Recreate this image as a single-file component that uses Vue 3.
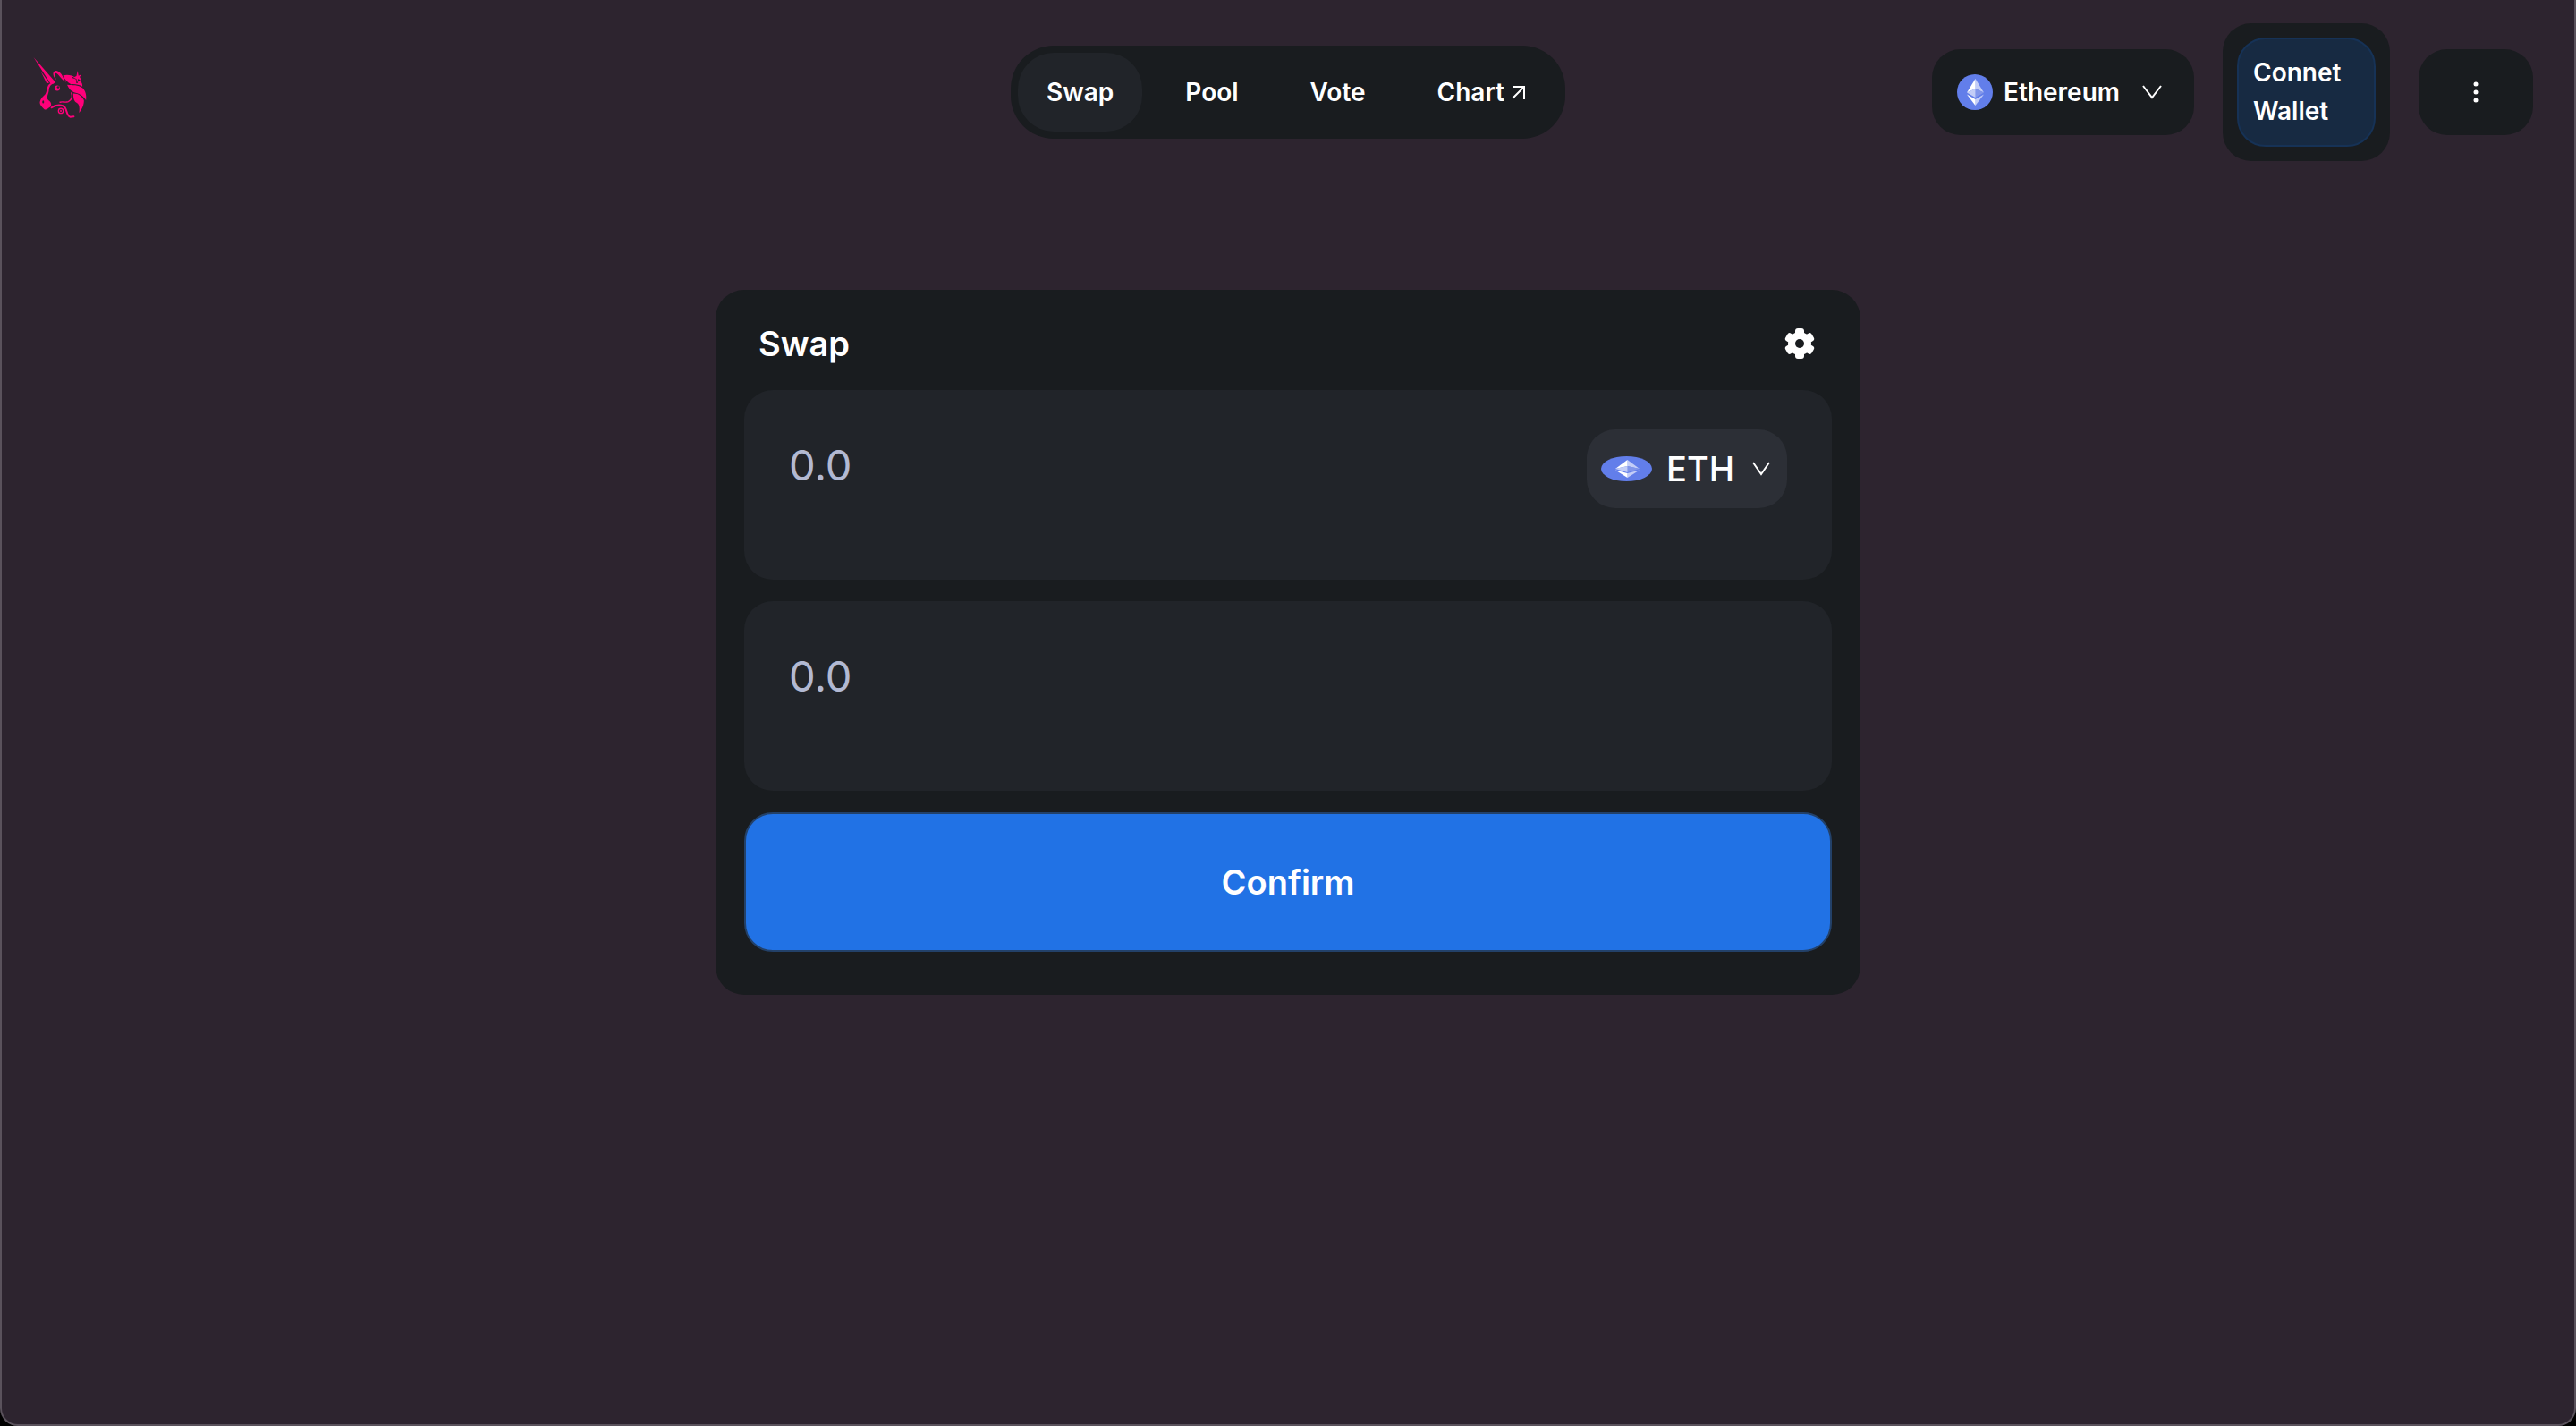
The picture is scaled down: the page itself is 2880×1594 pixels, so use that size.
<script setup>
import { ref } from 'vue'

const links = [
  { name: 'Swap', active: true },
  { name: 'Pool' },
  { name: 'Vote' },
  { name: 'Chart', external: true },
]
const chain = ref('Ethereum')
const token = ref('ETH')
const amountIn = ref('')
const amountOut = ref('')
</script>

<template>
  <div class="window">
    <header class="header">
      <a class="logo" href="#" aria-label="Home">
        <svg viewBox="45 35 190 215" fill="#ff007a">
          <path d="M52 41 L122 121 Q125 127 119 129 L109 130 Z" />
          <path d="M76 88 L96 128 L104 126 Z" />
          <path d="M122 127 C108 132 104 140 103 152 C101 166 95 172 98 180 C102 187 109 188 110 195 C112 201 110 207 104 209 C99 213 94 218 88 215 C80 206 72 199 73 190 C75 180 83 172 90 166 C97 157 95 145 101 134 C106 127 114 127 122 127 Z" />
          <path d="M118 100 C115 88 126 83 134 88 C141 92 145 97 148 103 C152 112 155 118 161 124 C148 119 140 104 132 97 C127 92 121 92 123 102 C124 107 126 111 128 116 C122 111 119 106 118 100 Z" />
          <path d="M150 102 C165 98 181 101 193 109 C207 116 216 125 215 139 C205 132 190 130 177 131 C164 124 156 114 150 102 Z" />
          <path d="M164 133 C183 135 200 132 216 144 C226 154 229 168 227 184 C217 168 202 161 187 158 C176 154 169 145 164 133 Z" />
          <path d="M184 162 C201 161 214 171 220 184 C221 198 214 214 204 226 C207 205 203 196 193 191 C186 186 185 174 184 162 Z" />
          <path d="M199 86 L202 103 L212 98 L206 107 L214 122 L201 113 L197 127 L195 113 L184 109 L195 104 Z" stroke="#2d242f" stroke-width="4" paint-order="stroke" />
          <g fill="none" stroke="#ff007a" stroke-linecap="round">
            <path d="M178 160 C183 174 178 184 168 189 C158 193 149 188 140 191" stroke-width="4" />
            <path d="M112 209 C126 198 149 198 157 209 C164 219 162 235 174 240 L186 239" stroke-width="6" />
            <circle cx="143" cy="220" r="8" stroke-width="4" />
          </g>
          <circle cx="143" cy="220" r="3" />
          <circle cx="131" cy="144" r="9" />
          <circle cx="134" cy="141" r="4" fill="#2d242f" />
          <ellipse cx="84" cy="190" rx="3" ry="5" fill="#2d242f" />
        </svg>
      </a>

      <nav class="nav">
        <a v-for="link in links" :key="link.name" href="#" :class="{ active: link.active }">
          {{ link.name }}
          <svg v-if="link.external" class="arrow" viewBox="0 0 22 18" fill="none" stroke="#fff" stroke-width="2">
            <path d="M3 16 L16 3 M3 3 H16 V17" />
          </svg>
        </a>
      </nav>

      <div class="tools">
        <label class="box chain">
          <svg class="chain-icon" viewBox="0 0 40 40">
            <circle cx="20" cy="20" r="20" fill="#627eea" />
            <path d="M20.500 5 V16 L30 20.500 Z" fill="#c3cdf7" />
            <path d="M20.500 5 L11 20.500 L20.500 16 Z" fill="#fff" />
            <path d="M20.500 16 L30 20.500 L20.500 26 Z" fill="#8296ea" />
            <path d="M20.500 16 L11 20.500 L20.500 26 Z" fill="#c3cdf7" />
            <path d="M20.500 28 V35 L30 22.500 Z" fill="#c3cdf7" />
            <path d="M20.500 28 V35 L11 22.500 Z" fill="#fff" />
          </svg>
          <select v-model="chain" aria-label="Network"><option>Ethereum</option></select>
          <svg class="chevron" viewBox="0 0 22 16" fill="none" stroke="#fff" stroke-width="2"><path d="M1 1 L11 14 L21 1" /></svg>
        </label>
        <div class="box wallet">
          <button type="button">Connet Wallet</button>
        </div>
        <button type="button" class="box more" aria-label="More">
          <svg viewBox="0 0 6 24" fill="#fff"><circle cx="3" cy="3" r="2.500" /><circle cx="3" cy="12" r="2.500" /><circle cx="3" cy="21" r="2.500" /></svg>
        </button>
      </div>
    </header>

    <main>
      <form class="card" @submit.prevent>
        <div class="title">
          <h1>Swap</h1>
          <button type="button" class="gear" aria-label="Settings">
            <svg viewBox="0 0 34 34">
              <g fill="#fff">
                <circle cx="17" cy="17" r="13" />
                <rect v-for="n in 6" :key="n" x="12" y="0" width="10" height="12" rx="3" :transform="`rotate(${n * 60} 17 17)`" />
              </g>
              <circle cx="17" cy="17" r="5" fill="#191c1f" />
            </svg>
          </button>
        </div>
        <div class="field">
          <input v-model="amountIn" type="text" placeholder="0.0" aria-label="Amount to pay" />
          <label class="token">
            <svg class="token-icon" viewBox="0 0 57 28">
              <ellipse cx="28.500" cy="14" rx="28.500" ry="14" fill="#627eea" />
              <path d="M29.500 4 V11 L43 14 Z" fill="#c3cdf7" />
              <path d="M29.500 4 L16 14 L29.500 11 Z" fill="#fff" />
              <path d="M29.500 11 L43 14 L29.500 18 Z" fill="#8296ea" />
              <path d="M29.500 11 L16 14 L29.500 18 Z" fill="#c3cdf7" />
              <path d="M29.500 19 V24 L43 15.500 Z" fill="#c3cdf7" />
              <path d="M29.500 19 V24 L16 15.500 Z" fill="#fff" />
            </svg>
            <select v-model="token" aria-label="Token"><option>ETH</option></select>
            <svg class="chevron" viewBox="0 0 22 16" fill="none" stroke="#fff" stroke-width="2"><path d="M2 1 L11 14 L20 1" /></svg>
          </label>
        </div>
        <div class="field">
          <input v-model="amountOut" type="text" placeholder="0.0" aria-label="Amount to receive" />
        </div>
        <button type="submit" class="confirm">Confirm</button>
      </form>
    </main>
  </div>
</template>

<style>
body {
  background: #000;
}
</style>

<style scoped>
* {
  box-sizing: border-box;
}
.window {
  min-height: 100vh;
  padding: 26px 46px 48px;
  border: 2px solid #5a525c;
  border-top: 0;
  border-radius: 0 0 20px 20px;
  background: #2d242f;
  color: #fff;
  font-family: Inter, "Liberation Sans", sans-serif;
  font-size: 28px;
  font-weight: 600;
}
button,
select,
input {
  margin: 0;
  padding: 0;
  border: 0;
  background: none;
  color: inherit;
  font: inherit;
  appearance: none;
  outline: none;
}
button,
select {
  cursor: pointer;
}
svg {
  display: block;
  flex: none;
}
.header {
  display: grid;
  grid-template-columns: 1fr auto 1fr;
  align-items: center;
}
.logo {
  justify-self: start;
  margin-left: -13px;
  padding-bottom: 10px;
}
.logo svg {
  width: 64px;
  height: 72px;
}
.nav {
  display: flex;
  gap: 16px;
  padding: 8px;
  border-radius: 48px;
  background: #191c1f;
}
.nav a {
  display: flex;
  align-items: center;
  gap: 6px;
  height: 88px;
  padding: 0 32px;
  border-radius: 40px;
  color: inherit;
  text-decoration: none;
}
.nav a.active {
  background: #212429;
}
.arrow {
  width: 22px;
  height: 18px;
}
.tools {
  display: flex;
  align-items: center;
  justify-content: flex-end;
  gap: 32px;
}
.box {
  border-radius: 32px;
  background: #191c1f;
}
.chain {
  display: flex;
  align-items: center;
  height: 96px;
  padding: 0 36px 0 28px;
}
.chain-icon {
  width: 40px;
  height: 40px;
  margin-right: 12px;
}
.chevron {
  width: 22px;
  height: 16px;
}
.chain .chevron {
  margin-left: 24px;
}
.wallet {
  padding: 16px;
}
.wallet button {
  display: block;
  width: 155px;
  padding: 16px;
  border: 2px solid #163256;
  border-radius: 32px;
  background: #172a42;
  line-height: 43px;
  text-align: left;
}
.more {
  display: grid;
  place-items: center;
  width: 128px;
  height: 96px;
}
.more svg {
  width: 6px;
  height: 24px;
}
main {
  display: flex;
  justify-content: center;
  margin-top: 144px;
}
.card {
  display: flex;
  flex-direction: column;
  gap: 24px;
  width: 100%;
  max-width: 1280px;
  padding: 0 32px 48px;
  border-radius: 32px;
  background: #191c1f;
  font-size: 38px;
}
.title {
  display: flex;
  align-items: center;
  justify-content: space-between;
  height: 112px;
  margin-bottom: -24px;
  padding: 8px 16px 0;
}
h1 {
  margin: 0;
  font-size: 38px;
  font-weight: 600;
}
.gear {
  margin-right: 3px;
}
.gear svg {
  width: 34px;
  height: 34px;
}
.field {
  display: flex;
  align-items: flex-start;
  min-height: 212px;
  padding: 44px 50px;
  border-radius: 32px;
  background: #212429;
}
.field input {
  flex: 1;
  min-width: 0;
  height: 78px;
  font-size: 47px;
  font-weight: 400;
}
.field input::placeholder {
  color: #b2b9d2;
  opacity: 1;
}
.token {
  display: flex;
  align-items: center;
  height: 88px;
  padding: 0 18px 0 16px;
  border-radius: 32px;
  background: #2c2f36;
  font-weight: 500;
}
.token-icon {
  width: 57px;
  height: 28px;
  margin-right: 16px;
}
.token .chevron {
  margin-left: 18px;
}
.confirm {
  height: 156px;
  border: 2px solid #234169;
  border-radius: 32px;
  background: #2172e5;
}
</style>
